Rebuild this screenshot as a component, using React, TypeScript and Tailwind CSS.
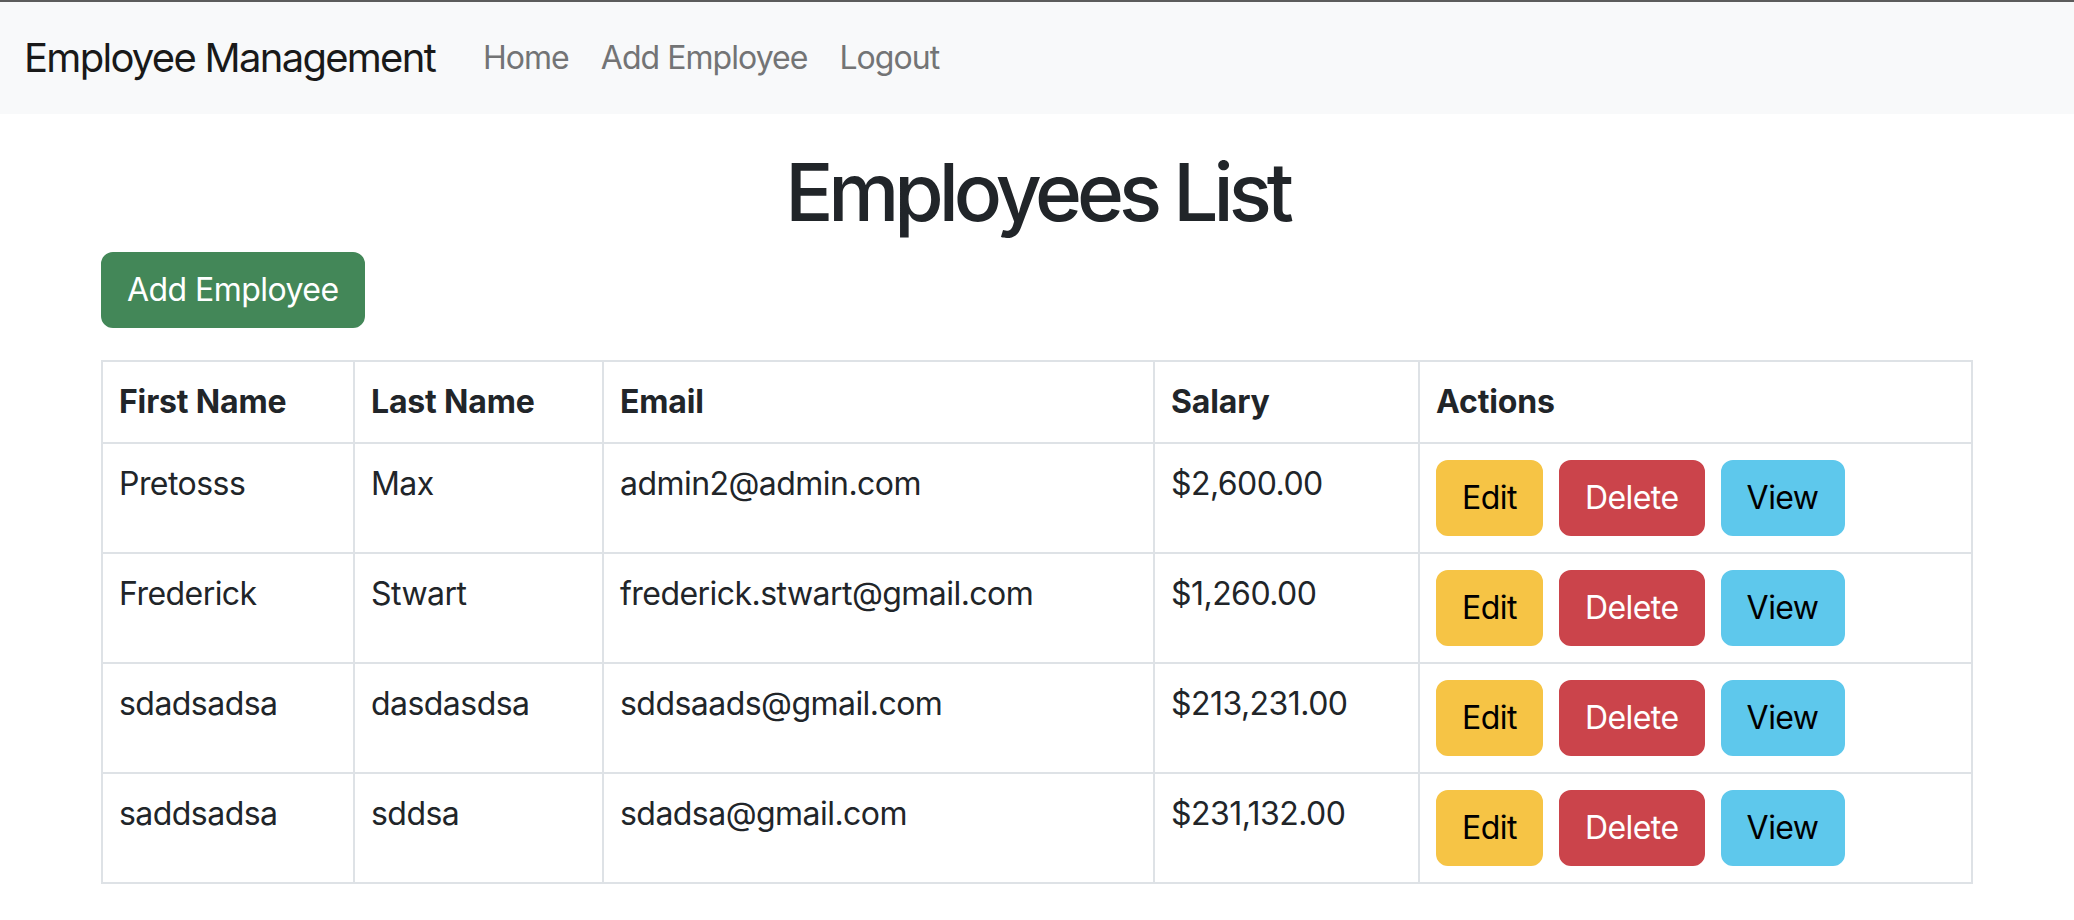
import React from 'react';

interface Employee {
  firstName: string;
  lastName: string;
  email: string;
  salary: string;
}

const employees: Employee[] = [
  { firstName: 'Pretosss', lastName: 'Max', email: 'admin2@admin.com', salary: '$2,600.00' },
  { firstName: 'Frederick', lastName: 'Stwart', email: 'frederick.stwart@gmail.com', salary: '$1,260.00' },
  { firstName: 'sdadsadsa', lastName: 'dasdasdsa', email: 'sddsaads@gmail.com', salary: '$213,231.00' },
  { firstName: 'saddsadsa', lastName: 'sddsa', email: 'sdadsa@gmail.com', salary: '$231,132.00' },
];

const font = { fontFamily: 'Inter, "Noto Sans", sans-serif' };

const Navbar: React.FC = () => (
  <nav className="flex items-center h-[112px] bg-[#f8f9fa] px-[24px]">
    <a className="text-[40px] leading-[60px] tracking-[-0.043em] text-[#191919] mr-[32px]">Employee Management</a>
    <div className="flex items-center">
      {['Home', 'Add Employee', 'Logout'].map((label) => (
        <a key={label} className="px-[16px] text-[32px] leading-[48px] tracking-[-0.03em] text-[#737475]">
          {label}
        </a>
      ))}
    </div>
  </nav>
);

const cell = 'border-2 border-[#dee2e6] p-[16px] align-top text-[32px] leading-[48px]';
const btn = 'px-[24px] py-[12px] text-[32px] leading-[48px] border-2 rounded-[12px]';

export default function App() {
  return (
    <div className="min-h-[920px] bg-white text-[#212529] tracking-[-0.034em]" style={font}>
      <div className="h-[2px] bg-[#5c5c5c]" />
      <Navbar />

      <div className="w-[1872px] mx-auto">
        {/* Title */}
        <h1 className="text-center text-[80px] leading-[96px] font-medium tracking-[-0.063em] mt-[30px] mb-[12px]">
          Employees List
        </h1>

        <button className={`${btn} mb-[32px] text-white bg-[#438758] border-[#438758]`}>Add Employee</button>

        {/* Table */}
        <table className="w-full table-fixed border-collapse border-2 border-[#dee2e6]">
          <colgroup>
            <col className="w-[252px]" />
            <col className="w-[249px]" />
            <col className="w-[551px]" />
            <col className="w-[265px]" />
            <col />
          </colgroup>
          <thead>
            <tr>
              {['First Name', 'Last Name', 'Email', 'Salary', 'Actions'].map((h) => (
                <th key={h} className={`${cell} text-left font-bold tracking-[-0.005em]`}>
                  {h}
                </th>
              ))}
            </tr>
          </thead>
          <tbody>
            {employees.map((e) => (
              <tr key={e.email}>
                <td className={cell}>{e.firstName}</td>
                <td className={cell}>{e.lastName}</td>
                <td className={cell}>{e.email}</td>
                <td className={cell}>{e.salary}</td>
                <td className={cell}>
                  <div className="flex gap-[16px]">
                    <button className={`${btn} text-black bg-[#f6c445] border-[#f6c445]`}>Edit</button>
                    <button className={`${btn} text-white bg-[#cb444b] border-[#cb444b]`}>Delete</button>
                    <button className={`${btn} text-black bg-[#5ec8ec] border-[#5ec8ec]`}>View</button>
                  </div>
                </td>
              </tr>
            ))}
          </tbody>
        </table>
      </div>
    </div>
  );
}
